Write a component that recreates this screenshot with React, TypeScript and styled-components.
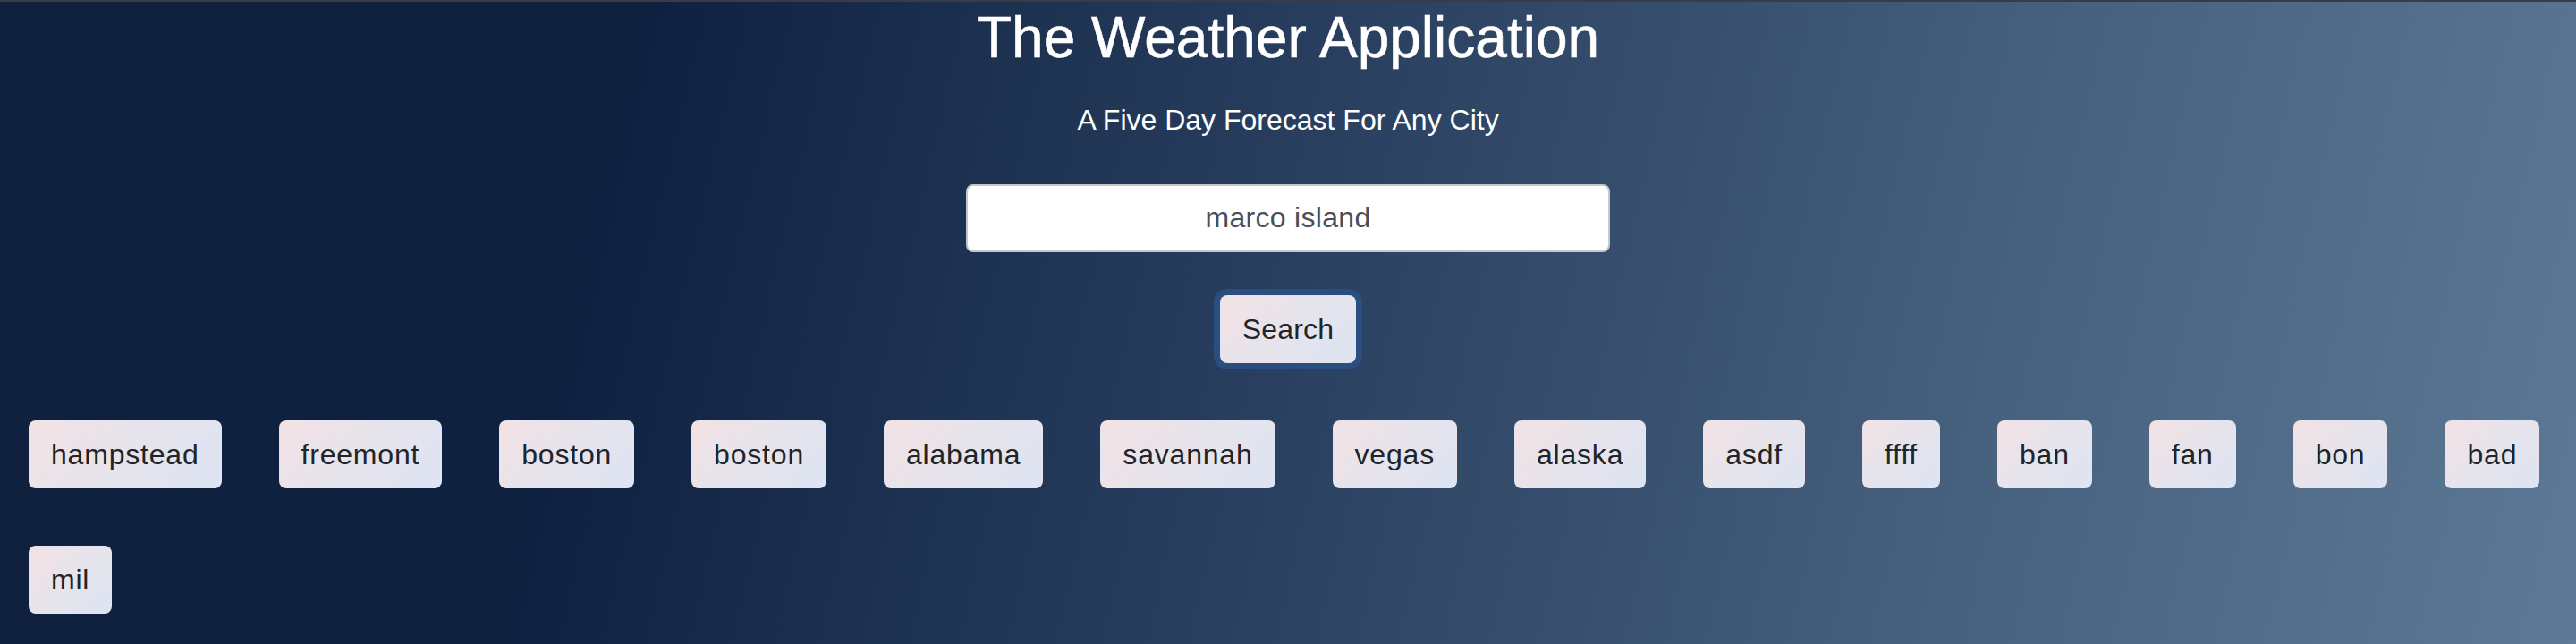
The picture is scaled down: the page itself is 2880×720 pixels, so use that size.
import React from "react";
import styled, { createGlobalStyle } from "styled-components";

const GlobalStyle = createGlobalStyle`
  html, body {
    margin: 0;
    padding: 0;
  }
  body {
    font-family: "Liberation Sans", Arial, sans-serif;
    background: #0f2140;
  }
  * { box-sizing: border-box; }
`;

const Page = styled.main`
  min-height: 720px;
  border-top: 2px solid #383d42;
  background: linear-gradient(103deg, #10213f 0%, #0f2140 24%, #2c4262 52%, #4a6582 80%, #5c7995 100%);
  display: flex;
  flex-direction: column;
  align-items: center;
  color: #ffffff;
`;

const Title = styled.h1`
  margin: 2px 0 0;
  font-size: 64px;
  font-weight: 400;
  line-height: 1.2;
  color: #ffffff;
  -webkit-text-stroke: 0.6px #ffffff;
`;

const Subtitle = styled.p`
  margin: 29px 0 0;
  font-size: 32px;
  line-height: 48px;
  font-weight: 400;
  color: #ffffff;
`;

const SearchInput = styled.input`
  margin-top: 48px;
  width: 720px;
  height: 76px;
  padding: 12px 24px;
  border: 2px solid #c3c9cf;
  border-radius: 8px;
  background: #ffffff;
  font-family: inherit;
  font-size: 32px;
  letter-spacing: 0.3px;
  color: #495057;
  text-align: center;
  outline: none;
`;

const ActionButton = styled.button<{ $focused?: boolean }>`
  height: 76px;
  padding: 12px 24px;
  border: 1px solid transparent;
  border-radius: 8px;
  background: linear-gradient(135deg, #f3e2e5 0%, #e6e4ec 50%, #dde4f3 100%);
  font-family: inherit;
  font-size: 32px;
  line-height: 48px;
  letter-spacing: 0.8px;
  color: #212529;
  cursor: pointer;
  white-space: nowrap;
  box-shadow: ${(p) => (p.$focused ? "0 0 0 7px #2b4e80" : "none")};
`;

const SearchButton = styled(ActionButton)`
  margin-top: 48px;
  letter-spacing: 0.2px;
`;

const History = styled.section`
  align-self: stretch;
  margin-top: 64px;
  padding: 0 32px;
  display: flex;
  flex-wrap: wrap;
  column-gap: 64px;
  row-gap: 64px;
`;

const cities = [
  "hampstead",
  "freemont",
  "boston",
  "boston",
  "alabama",
  "savannah",
  "vegas",
  "alaska",
  "asdf",
  "ffff",
  "ban",
  "fan",
  "bon",
  "bad",
  "mil",
];

export default function App() {
  return (
    <>
      <GlobalStyle />
      <Page>
        <Title>The Weather Application</Title>
        <Subtitle>A Five Day Forecast For Any City</Subtitle>
        <SearchInput type="text" defaultValue="marco island" />
        <SearchButton $focused>Search</SearchButton>
        <History>
          {cities.map((c, i) => (
            <ActionButton key={i}>{c}</ActionButton>
          ))}
        </History>
      </Page>
    </>
  );
}
